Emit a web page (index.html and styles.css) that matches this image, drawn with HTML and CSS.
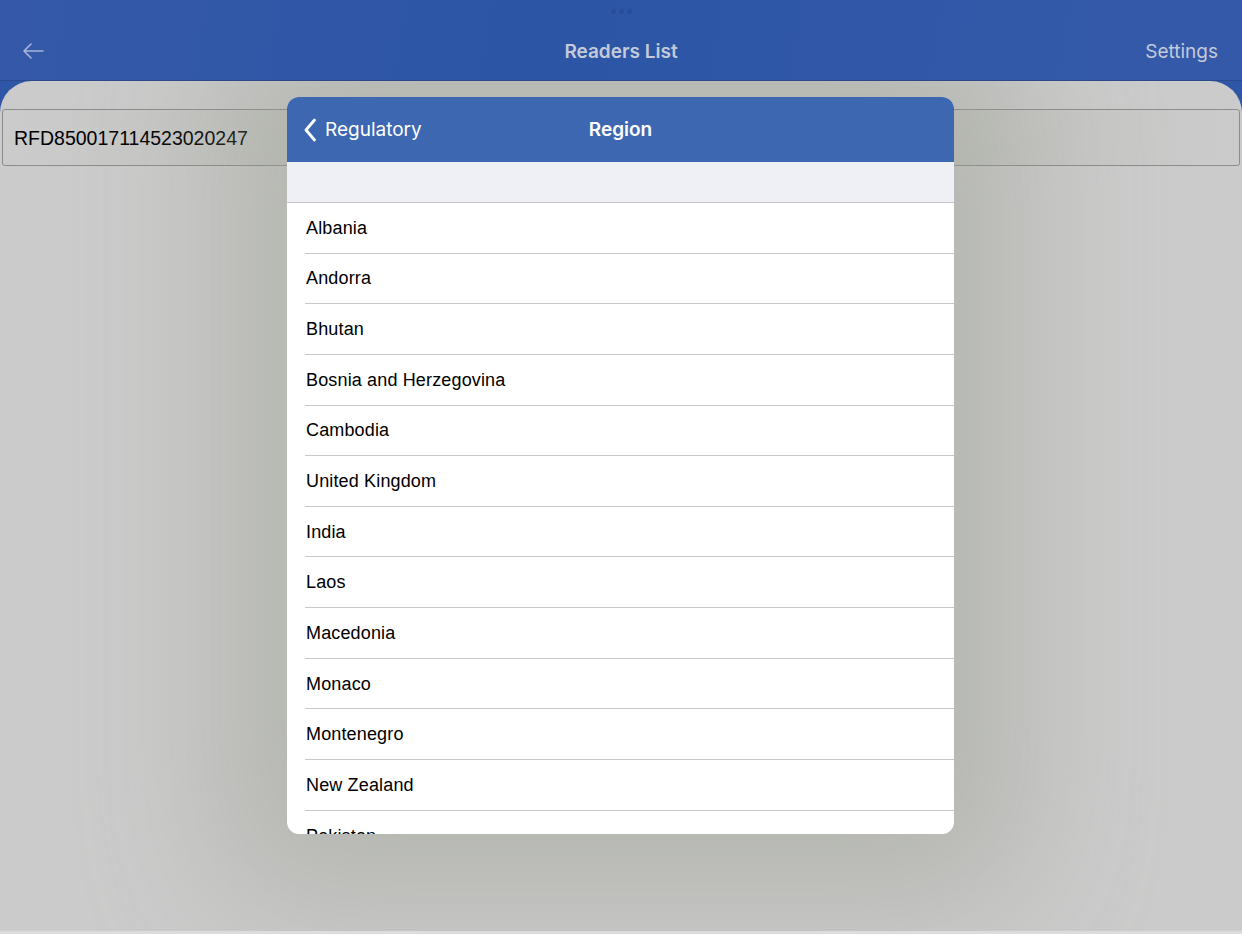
FILE: index.html
```html
<!DOCTYPE html>
<html lang="en">
<head>
    <meta charset="UTF-8">
    <meta name="viewport" content="width=device-width, initial-scale=1.0">
    <title>Readers List</title>
    <link rel="stylesheet" href="styles.css">
</head>
<body>
    <div class="app">
        <header class="topbar">
            <div class="grabber"><span></span><span></span><span></span></div>
            <div class="nav">
                <button class="nav-back" aria-label="Back">
                    <svg width="22" height="16" viewBox="0 0 22 16"><path d="M21 8H2M9 1L2 8l7 7" fill="none" stroke="currentColor" stroke-width="1.6" stroke-linecap="round" stroke-linejoin="round"/></svg>
                </button>
                <div class="nav-title">Readers List</div>
                <button class="nav-action">Settings</button>
            </div>
        </header>

        <main class="sheet">
            <div class="reader-field">RFD850017114523020247</div>

            <!-- Region picker popup -->
            <div class="modal">
                <div class="modal-head">
                    <button class="modal-back">
                        <svg width="14" height="24" viewBox="0 0 14 24"><path d="M11.5 2L3 12l8.5 10" fill="none" stroke="currentColor" stroke-width="2.8" stroke-linecap="round" stroke-linejoin="round"/></svg>
                        Regulatory
                    </button>
                    <div class="modal-title">Region</div>
                </div>
                <div class="modal-section"></div>
                <ul class="region-list">
                    <li>Albania</li>
                    <li>Andorra</li>
                    <li>Bhutan</li>
                    <li>Bosnia and Herzegovina</li>
                    <li>Cambodia</li>
                    <li>United Kingdom</li>
                    <li>India</li>
                    <li>Laos</li>
                    <li>Macedonia</li>
                    <li>Monaco</li>
                    <li>Montenegro</li>
                    <li>New Zealand</li>
                    <li>Pakistan</li>
                </ul>
            </div>
        </main>
    </div>
</body>
</html>
```

FILE: styles.css
```css
body {
    margin: 0;
    width: 1242px;
    height: 934px;
    overflow: hidden;
    background: #3057a7;
    font-family: Inter, "Open Sans", sans-serif;
}
.app {
    display: flex;
    flex-direction: column;
    height: 934px;
}
.topbar {
    height: 80px;
    background: linear-gradient(100deg, #3559a8 0%, #2c55a6 45%, #3158a8 70%, #3459a8 100%);
    border-bottom: 1px solid #2a4a8e;
    display: flex;
    flex-direction: column;
}
.grabber {
    display: flex;
    justify-content: center;
    gap: 3px;
    padding-top: 9px;
    height: 5px;
}
.grabber span {
    width: 5px;
    height: 5px;
    border-radius: 50%;
    background: #284c98;
}
.nav {
    flex: 1;
    display: flex;
    align-items: center;
    justify-content: space-between;
    padding: 8px 24px 0 22px;
    position: relative;
}
.nav button {
    background: none;
    border: none;
    padding: 0;
    font-family: inherit;
    cursor: pointer;
}
.nav-back {
    color: #a7b5d8;
    display: flex;
}
.nav-title {
    position: absolute;
    left: 0;
    right: 0;
    text-align: center;
    font-size: 19px;
    font-weight: 600;
    color: #c3cad9;
    pointer-events: none;
}
.nav-action {
    font-size: 19px;
    color: #c3cad9;
}

.sheet {
    flex: 1;
    position: relative;
    overflow: hidden;
    background: #cbcbcb;
    border-radius: 32px 32px 0 0;
    padding: 28px 2px 0 2px;
    border-bottom: 3px solid #dcdcdc;
}
.reader-field {
    height: 53px;
    border: 1px solid #8c8c8c;
    border-radius: 3px;
    background: linear-gradient(90deg, #cbcbcb 0%, #c2c3c0 30%, #c2c3c0 70%, #cbcbcb 100%);
    display: flex;
    align-items: center;
    padding: 2px 0 0 11px;
    font-family: "Liberation Sans", Arial, sans-serif;
    font-size: 19.5px;
    color: #000;
}

.modal {
    position: absolute;
    left: 287px;
    top: 16px;
    width: 667px;
    height: 737px;
    background: #fff;
    border-radius: 12px;
    overflow: hidden;
    display: flex;
    flex-direction: column;
    box-shadow: 0 0 140px 60px rgba(150, 155, 140, 0.45);
}
.modal-head {
    height: 65px;
    flex-shrink: 0;
    background: #3d67b1;
    display: flex;
    align-items: center;
    position: relative;
    color: #fff;
}
.modal-back {
    background: none;
    border: none;
    color: #fff;
    display: flex;
    align-items: center;
    gap: 8px;
    padding: 0 0 0 16px;
    font-family: inherit;
    font-size: 19px;
    cursor: pointer;
}
.modal-title {
    position: absolute;
    left: 0;
    right: 0;
    text-align: center;
    font-size: 19px;
    font-weight: 600;
    pointer-events: none;
}
.modal-section {
    height: 40px;
    flex-shrink: 0;
    background: #eff0f5;
    border-bottom: 1px solid #c8c7cc;
}
.region-list {
    list-style: none;
    margin: 0;
    padding: 0 0 0 18px;
    overflow: hidden;
}
.region-list li {
    box-sizing: border-box;
    height: 50.65px;
    border-bottom: 1px solid #c8c7cc;
    display: flex;
    align-items: center;
    padding: 1px 0 0 1px;
    font-family: "Liberation Sans", Arial, sans-serif;
    font-size: 18px;
    letter-spacing: 0.15px;
    color: #000;
}
```
